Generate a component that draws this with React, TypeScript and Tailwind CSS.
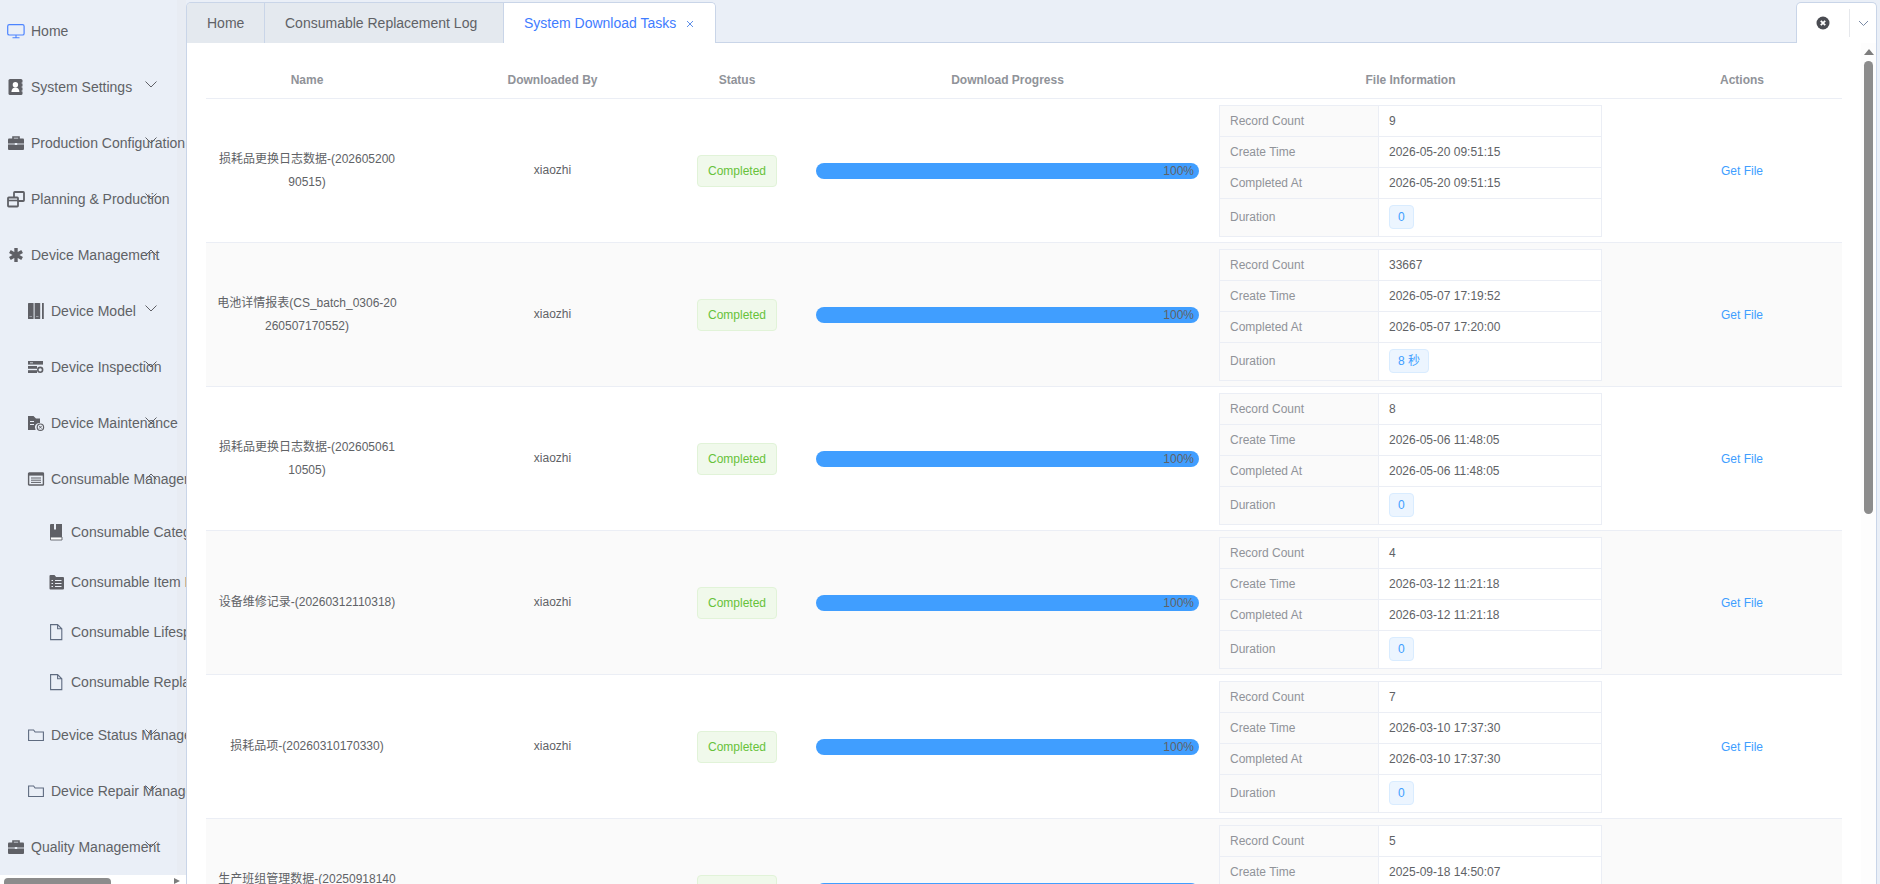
import React from "react";

const GRAY = "#5f6066";
const FONT = "font-['Liberation_Sans','Noto_Sans_CJK_SC',sans-serif]";

const Svg = ({ children }: { children: React.ReactNode }) => (
  <svg width="18" height="18" viewBox="0 0 18 18" className="shrink-0">
    {children}
  </svg>
);

const HomeIcon = () => (
  <Svg>
    <rect x="0.7" y="2.6" width="16.4" height="10.4" rx="1.6" fill="none" stroke="#4c84ff" strokeWidth="1.2" />
    <path d="M9 13v2.6M5.5 15.7h7" stroke="#4c84ff" strokeWidth="1.1" fill="none" />
  </Svg>
);

const ContactsIcon = () => (
  <Svg>
    <rect x="1.5" y="1" width="14" height="16" rx="1.5" fill={GRAY} />
    <circle cx="8.4" cy="6.8" r="2.7" fill="#fff" />
    <path d="M4.4 14c0-3 2-4.4 4-4.4s4 1.4 4 4.4z" fill="#fff" />
    <path d="M14.6 5h1.6M14.6 9h1.6M14.6 13h1.6" stroke="#eaeff7" strokeWidth="1" />
  </Svg>
);

const BriefcaseIcon = () => (
  <Svg>
    <path d="M6 5V3h6v2" fill="none" stroke={GRAY} strokeWidth="1.6" />
    <rect x="1" y="4.5" width="16" height="11.5" rx="1" fill={GRAY} />
    <path d="M1 10h16" stroke="#eaeff7" strokeWidth="0.9" />
    <rect x="7.8" y="9" width="2.4" height="2" fill="#eaeff7" />
  </Svg>
);

const WindowsIcon = () => (
  <Svg>
    <rect x="7" y="2" width="10" height="9" rx="0.8" fill="none" stroke={GRAY} strokeWidth="1.8" />
    <rect x="1" y="7.5" width="10" height="9" rx="0.8" fill="#eaeff7" stroke={GRAY} strokeWidth="1.8" />
    <path d="M1 10.5h10" stroke={GRAY} strokeWidth="1.6" />
  </Svg>
);

const AsteriskIcon = () => (
  <Svg>
    <path d="M9 2v14M2.9 5.5l12.2 7M15.1 5.5l-12.2 7" stroke={GRAY} strokeWidth="3.4" fill="none" />
  </Svg>
);

const BooksIcon = () => (
  <Svg>
    <rect x="1" y="1" width="5.6" height="16" rx="0.6" fill={GRAY} />
    <rect x="7.6" y="1" width="5.6" height="16" rx="0.6" fill={GRAY} />
    <rect x="15" y="1" width="1.8" height="16" fill={GRAY} />
    <path d="M2.5 14.5h2.5M9 14.5h2.5" stroke="#a9adb5" strokeWidth="0.8" />
  </Svg>
);

const InspectionIcon = () => (
  <Svg>
    <rect x="1" y="3" width="15" height="3.6" fill={GRAY} />
    <rect x="1" y="8" width="9" height="2.8" fill={GRAY} />
    <rect x="1" y="12.2" width="9" height="2.8" fill={GRAY} />
    <circle cx="13.2" cy="11.8" r="2.4" fill="none" stroke={GRAY} strokeWidth="1.6" />
    <path d="M3 4.8h3" stroke="#eaeff7" strokeWidth="0.8" />
  </Svg>
);

const MaintenanceIcon = () => (
  <Svg>
    <path d="M1 2h5.5l2.5 2.5h4V9a4.5 4.5 0 0 0-4.4 7H1z" fill={GRAY} />
    <path d="M3 7.5h4M3 10.5h4" stroke="#eaeff7" strokeWidth="1" />
    <circle cx="13.4" cy="13.2" r="3.2" fill="none" stroke={GRAY} strokeWidth="1.2" />
    <path d="M12 11.8l2.8 2.8M14.8 11.8L12 14.6" stroke={GRAY} strokeWidth="1" />
  </Svg>
);

const TableIcon = () => (
  <Svg>
    <rect x="1.6" y="3" width="14.8" height="12" rx="0.6" fill="none" stroke={GRAY} strokeWidth="1.4" />
    <rect x="1.6" y="3" width="14.8" height="2.6" fill={GRAY} />
    <path d="M4 8h10M4 10.2h10M4 12.4h10" stroke={GRAY} strokeWidth="1" />
  </Svg>
);

const BookIcon = () => (
  <Svg>
    <path d="M1 2a1 1 0 0 1 1-1h11v13H1z" fill={GRAY} />
    <path d="M1.5 14h11.5v3H1.5z" fill="#fff" stroke={GRAY} strokeWidth="0.9" />
    <rect x="5" y="1" width="2" height="5.5" fill="#eaeff7" />
  </Svg>
);

const FolderListIcon = () => (
  <Svg>
    <path d="M0.5 3a1 1 0 0 1 1-1h4l1.6 2H14a1 1 0 0 1 1 1v10.5a1 1 0 0 1-1 1H1.500a1 1 0 0 1-1-1z" fill={GRAY} />
    <path d="M6 8h6.500M6 11h6.500M6 14h6.500M2.500 8h1.500M2.500 11h1.500M2.500 14h1.500" stroke="#eaeff7" strokeWidth="1" transform="translate(0 -0.500)" />
  </Svg>
);

const FileIcon = () => (
  <Svg>
    <path d="M1.600 1.600h7l4.200 4.200v10.800H1.600z M8.600 1.600v4.200h4.200" fill="none" stroke="#5f6b80" strokeWidth="1.100" />
  </Svg>
);

const FolderIcon = () => (
  <Svg>
    <path d="M1.600 14.500V4h5l1.500 2h8.300v8.500z" fill="none" stroke="#5f6b80" strokeWidth="1.100" />
  </Svg>
);

const menu = [
  { label: "Home", level: 1, icon: <HomeIcon /> },
  { label: "System Settings", level: 1, icon: <ContactsIcon />, arrow: "down" },
  { label: "Production Configuration", level: 1, icon: <BriefcaseIcon />, arrow: "down" },
  { label: "Planning & Production", level: 1, icon: <WindowsIcon />, arrow: "down" },
  { label: "Device Management", level: 1, icon: <AsteriskIcon />, arrow: "up" },
  { label: "Device Model", level: 2, icon: <BooksIcon />, arrow: "down" },
  { label: "Device Inspection", level: 2, icon: <InspectionIcon />, arrow: "down" },
  { label: "Device Maintenance", level: 2, icon: <MaintenanceIcon />, arrow: "down" },
  { label: "Consumable Management", level: 2, icon: <TableIcon />, arrow: "up" },
  { label: "Consumable Categories", level: 3, icon: <BookIcon /> },
  { label: "Consumable Item List", level: 3, icon: <FolderListIcon /> },
  { label: "Consumable Lifespan", level: 3, icon: <FileIcon /> },
  { label: "Consumable Replacement Log", level: 3, icon: <FileIcon /> },
  { label: "Device Status Management", level: 2, icon: <FolderIcon />, arrow: "down" },
  { label: "Device Repair Management", level: 2, icon: <FolderIcon />, arrow: "down" },
  { label: "Quality Management", level: 1, icon: <BriefcaseIcon />, arrow: "down" },
];

const tasks = [
  { name: "损耗品更换日志数据-(20260520090515)", count: "9", created: "2026-05-20 09:51:15", done: "2026-05-20 09:51:15", duration: "0" },
  { name: "电池详情报表(CS_batch_0306-20260507170552)", count: "33667", created: "2026-05-07 17:19:52", done: "2026-05-07 17:20:00", duration: "8 秒" },
  { name: "损耗品更换日志数据-(20260506110505)", count: "8", created: "2026-05-06 11:48:05", done: "2026-05-06 11:48:05", duration: "0" },
  { name: "设备维修记录-(20260312110318)", count: "4", created: "2026-03-12 11:21:18", done: "2026-03-12 11:21:18", duration: "0" },
  { name: "损耗品项-(20260310170330)", count: "7", created: "2026-03-10 17:37:30", done: "2026-03-10 17:37:30", duration: "0" },
  { name: "生产班组管理数据-(20250918140507)", count: "5", created: "2025-09-18 14:50:07", done: "2025-09-18 14:50:07", duration: "0" },
];

const COLS = "grid grid-cols-[202px_260px_138px_403px_403px_230px] w-[1636px]";

const MenuItem = ({ item }: { item: (typeof menu)[number] }) => (
  <div
    className={`relative flex items-center shrink-0 whitespace-nowrap text-sm text-[#606266] ${
      item.level === 1 ? "h-[56px] pl-[7px]" : item.level === 2 ? "h-[56px] pl-[27px]" : "h-[50px] pl-[49px]"
    }`}
  >
    <span className={`flex shrink-0 ${item.level === 3 ? "w-[22px]" : "w-[24px]"}`}>{item.icon}</span>
    {item.label}
    {item.arrow && (
      <svg width="12" height="7" viewBox="0 0 12 7" className="absolute left-[145px] top-[22px]">
        <path d={item.arrow === "down" ? "M0.500 0.500L6 6l5.500-5.500" : "M0.500 6.500L6 1l5.500 5.500"} fill="none" stroke="#5f6066" strokeWidth="1" />
      </svg>
    )}
  </div>
);

const InfoRow = ({ label, children, last }: { label: string; children: React.ReactNode; last?: boolean }) => (
  <div className={`grid grid-cols-[159px_1fr] ${last ? "h-[37px]" : "h-[31px] border-b border-[#ebeef5]"}`}>
    <div className="flex items-center pl-[10px] bg-[#fafafa] text-[#909399] border-r border-[#ebeef5]">{label}</div>
    <div className="flex items-center pl-[10px] bg-white">{children}</div>
  </div>
);

const App = () => {
  return (
    <div className={`flex w-screen h-screen overflow-hidden bg-[#eaeff7] ${FONT}`}>
      {/* sidebar */}
      <aside className="relative w-[186px] shrink-0 flex flex-col overflow-hidden">
        <div className="absolute top-0 bottom-0 right-0 w-[9px] bg-[#e8ecf3]" />
        <div className="relative flex-1 flex flex-col pt-[3px] overflow-hidden">
          {menu.map((item) => (
            <MenuItem key={item.label} item={item} />
          ))}
        </div>
        <div className="relative h-[9px] shrink-0 bg-white flex items-end justify-between pl-[4px] pr-[6px]">
          <div className="w-[107px] h-[6px] bg-[#8c8c8c] rounded-t-[4px]" />
          <div className="w-0 h-0 border-y-[3px] border-y-transparent border-l-[6px] border-l-[#7d7d7d]" />
        </div>
      </aside>

      {/* main */}
      <main className="relative flex-1 mr-[3px] flex flex-col overflow-hidden">
        <div className="flex justify-between h-[43px] pt-[2px] shrink-0 border-b border-[#c9d5e8]">
          <div className="flex h-[41px] text-sm border border-b-0 border-[#c9d5e8] rounded-t-[5px] overflow-hidden">
            <div className="flex items-center pl-[20px] w-[78px] bg-[#e4e9ef] text-[#606266] border-r border-[#c9d5e8]">Home</div>
            <div className="flex items-center pl-[20px] w-[239px] bg-[#e4e9ef] text-[#606266] border-r border-[#c9d5e8]">Consumable Replacement Log</div>
            <div className="flex items-center pl-[20px] w-[211px] bg-white text-[#3f7cff]">
              System Download Tasks
              <svg width="8" height="8" viewBox="0 0 8 8" className="ml-[10px] mt-[1px]">
                <path d="M1 1l6 6M7 1L1 7" stroke="#5f8fe8" strokeWidth="1" />
              </svg>
            </div>
          </div>
          <div className="flex items-center w-[81px] h-[41px] bg-white border border-b-0 border-[#c9d5e8] rounded-t-[5px]">
            <div className="flex justify-center w-[52px]">
              <svg width="14" height="14" viewBox="0 0 14 14">
                <circle cx="7" cy="7" r="6.500" fill="#4a4c52" />
                <path d="M4.800 4.800l4.400 4.400M9.200 4.800L4.800 9.200" stroke="#fff" strokeWidth="1.800" />
              </svg>
            </div>
            <div className="flex justify-center items-center h-[28px] flex-1 border-l border-[#e6e8ec]">
              <svg width="11" height="7" viewBox="0 0 11 7">
                <path d="M1 1l4.500 4.500L10 1" fill="none" stroke="#7a8aa5" strokeWidth="1" />
              </svg>
            </div>
          </div>
        </div>

        <div className="relative flex-1 bg-white border-x border-[#c9d5e8] pl-[19px] overflow-hidden text-xs text-[#606266]">
          <div className={`${COLS} h-[56px] pt-[18px] items-center text-center font-bold text-[#909399] border-b border-[#ebeef5]`}>
            <div>Name</div>
            <div className="pl-[29px]">Downloaded By</div>
            <div>Status</div>
            <div>Download Progress</div>
            <div>File Information</div>
            <div className="pl-[30px]">Actions</div>
          </div>

          {tasks.map((t, i) => (
            <div key={t.created} className={`${COLS} h-[144px] shrink-0 items-center text-center border-b border-[#ebeef5] ${i % 2 === 1 ? "bg-[#fafafa]" : "bg-white"}`}>
              <div className="px-[10.5px] leading-[23px] break-all">{t.name}</div>
              <div className="pl-[29px] mb-[2px]">xiaozhi</div>
              <div className="flex justify-center">
                <span className="flex items-center justify-center w-[80px] h-[32px] rounded-[4px] bg-[#f0f9eb] border border-[#e1f3d8] text-[#67c23a]">Completed</span>
              </div>
              <div className="px-[10px]">
                <div className="flex items-center justify-end h-[16px] pr-[5px] rounded-full bg-[#409eff] text-[#606266]">100%</div>
              </div>
              <div className="px-[10px]">
                <div className="border border-[#ebeef5] text-left">
                  <InfoRow label="Record Count">{t.count}</InfoRow>
                  <InfoRow label="Create Time">{t.created}</InfoRow>
                  <InfoRow label="Completed At">{t.done}</InfoRow>
                  <InfoRow label="Duration" last>
                    <span className="flex items-center h-[24px] px-[8px] rounded-[4px] bg-[#ecf5ff] border border-[#d9ecff] text-[#409eff]">{t.duration}</span>
                  </InfoRow>
                </div>
              </div>
              <div className="pl-[30px] text-[#409eff]">Get File</div>
            </div>
          ))}

          {/* page scrollbar */}
          <div className="absolute right-0 top-0 bottom-0 w-[15px] bg-[#fdfdfd]">
            <div className="absolute left-[3px] top-[6px] w-0 h-0 border-x-[5px] border-x-transparent border-b-[6px] border-b-[#7d7d7d]" />
            <div className="absolute left-[3px] top-[18px] w-[9px] h-[453px] rounded-full bg-[#8c8c8c]" />
          </div>
        </div>
      </main>
    </div>
  );
};

export default App;
